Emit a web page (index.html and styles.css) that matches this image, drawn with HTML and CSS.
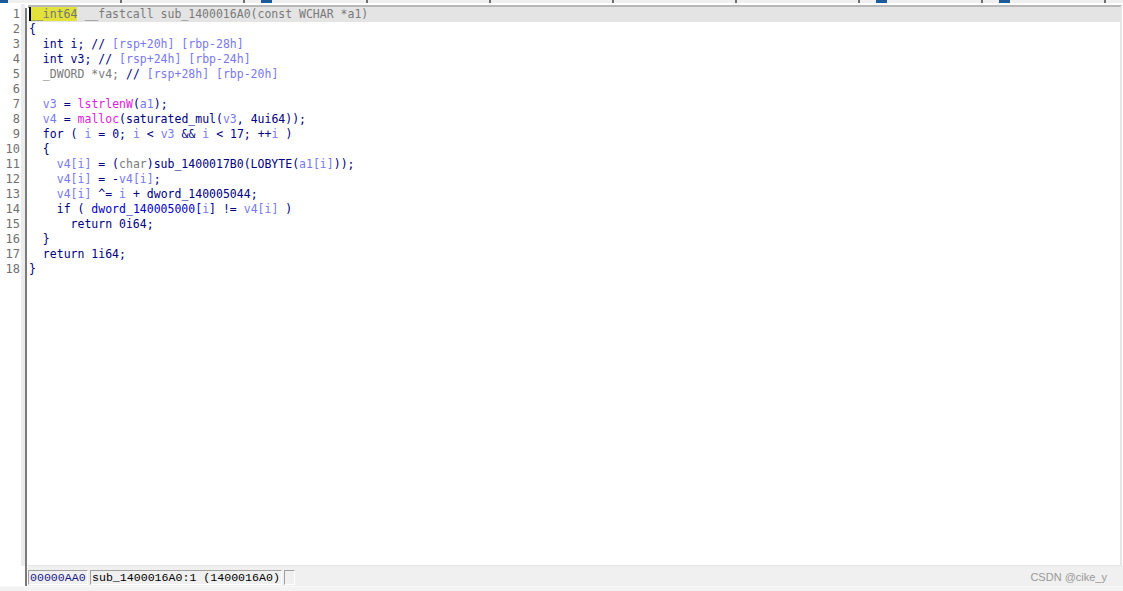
FILE: index.html
```html
<!DOCTYPE html>
<html>
<head>
<meta charset="utf-8">
<link rel="stylesheet" href="styles.css">
</head>
<body>
<div class="tabs">
  <div class="tab"><span class="tmark first"></span></div>
  <div class="tab"></div>
  <div class="tab"><span class="tmark"></span></div>
  <div class="tab"></div>
  <div class="tab"></div>
  <div class="tab"></div>
  <div class="tab"></div>
  <div class="tab"><span class="tmark"></span></div>
  <div class="tab"><span class="tmark"></span></div>
  <div class="tab last"></div>
</div>
<div class="main">
  <div class="gutter">
    <div class="nums">
      <div>1</div><div>2</div><div>3</div><div>4</div><div>5</div><div>6</div>
      <div>7</div><div>8</div><div>9</div><div>10</div><div>11</div><div>12</div>
      <div>13</div><div>14</div><div>15</div><div>16</div><div>17</div><div>18</div>
    </div>
    <div class="gstrip"></div>
    <div class="gline"></div>
  </div>
  <div class="editor">
    <div class="code">
      <div class="ln cur"><span class="cursor"></span><span class="hl">__int64</span><span class="g"> __fastcall sub_1400016A0(const WCHAR *a1)</span></div>
      <div class="ln"><span class="n">{</span></div>
      <div class="ln">  <span class="n">int i; //</span> <span class="l">[rsp+20h] [rbp-28h]</span></div>
      <div class="ln">  <span class="n">int v3; //</span> <span class="l">[rsp+24h] [rbp-24h]</span></div>
      <div class="ln">  <span class="g">_DWORD *v4;</span> <span class="n">//</span> <span class="l">[rsp+28h] [rbp-20h]</span></div>
      <div class="ln"> </div>
      <div class="ln">  <span class="l">v3</span> <span class="n">=</span> <span class="m">lstrlenW</span><span class="n">(</span><span class="l">a1</span><span class="n">);</span></div>
      <div class="ln">  <span class="l">v4</span> <span class="n">=</span> <span class="m">malloc</span><span class="n">(saturated_mul(</span><span class="l">v3</span><span class="n">, 4ui64));</span></div>
      <div class="ln">  <span class="n">for (</span> <span class="l">i</span> <span class="n">= 0;</span> <span class="l">i</span> <span class="n">&lt;</span> <span class="l">v3</span> <span class="n">&amp;&amp;</span> <span class="l">i</span> <span class="n">&lt; 17; ++</span><span class="l">i</span> <span class="n">)</span></div>
      <div class="ln">  <span class="n">{</span></div>
      <div class="ln">    <span class="l">v4[i]</span> <span class="n">= (</span><span class="g">char</span><span class="n">)sub_1400017B0(LOBYTE(</span><span class="l">a1[i]</span><span class="n">));</span></div>
      <div class="ln">    <span class="l">v4[i]</span> <span class="n">= -</span><span class="l">v4[i]</span><span class="n">;</span></div>
      <div class="ln">    <span class="l">v4[i]</span> <span class="n">^=</span> <span class="l">i</span> <span class="n">+ dword_140005044;</span></div>
      <div class="ln">    <span class="n">if (</span> <span class="b">dword_140005000[</span><span class="l">i</span><span class="n">] !=</span> <span class="l">v4[i]</span> <span class="n">)</span></div>
      <div class="ln">      <span class="n">return 0i64;</span></div>
      <div class="ln">  <span class="n">}</span></div>
      <div class="ln">  <span class="n">return 1i64;</span></div>
      <div class="ln"><span class="n">}</span></div>
    </div>
  </div>
</div>
<div class="status">
  <div class="gutter-s"><div class="gline"></div></div>
  <div class="fields">
    <div class="field addr">00000AA0</div>
    <div class="field">sub_1400016A0:1 (1400016A0)</div>
    <div class="field empty"></div>
    <div class="spacer"></div>
    <div class="wm">CSDN @cike_y</div>
  </div>
</div>
<div class="bottom"></div>
</body>
</html>
```
FILE: styles.css
```css
html, body {
  margin: 0;
  padding: 0;
  background: #ffffff;
  width: 1123px;
  height: 591px;
  overflow: hidden;
}
.tabs {
  display: flex;
  height: 3px;
  background: #f0f0f0;
}
.tab {
  width: 121px;
  flex: none;
  border-right: 2px solid #707070;
  position: relative;
}
.tab:first-child { width: 120px; }
.tab.last { width: 4px; border-right: none; flex: 1; }
.tmark {
  position: absolute;
  left: 16px;
  top: 0;
  width: 11px;
  height: 3px;
  background: #1f5a9a;
}
.tmark.first { left: 0; width: 8px; }
.main {
  display: flex;
  height: 563px;
}
.gutter {
  display: flex;
  width: 28px;
  flex: none;
  padding-top: 1px;
}
.nums {
  width: 21px;
  padding-top: 3px;
  font-family: "DejaVu Sans Mono", "Liberation Mono", monospace;
  font-size: 12px;
  line-height: 15px;
  color: #707070;
  text-align: right;
  box-sizing: border-box;
  padding-right: 1px;
}
.gstrip {
  width: 4px;
  background: #ececec;
}
.gline {
  width: 2px;
  background: #7a7a7a;
  margin-top: 4px;
}
.editor {
  flex: 1;
  border-top: 2px solid #b8b8b8;
  box-shadow: inset 0 1px 0 #888;
  margin-top: 2px;
  border-right: 2px solid #e6e6e6;
  border-bottom: 1px solid #e6e6e6;
  margin-right: 1px;
  overflow: hidden;
}
.code {
  font-family: "DejaVu Sans Mono", "Liberation Mono", monospace;
  font-size: 11.5px;
  line-height: 15px;
  color: #000080;
  padding-left: 1px;
}
.ln { height: 15px; white-space: pre; }
.ln.cur { background: #e4e4e4; }
.cursor {
  display: inline-block;
  width: 2px;
  height: 14px;
  vertical-align: -3px;
  background: #000;
  margin-right: -2px;
  position: relative;
  z-index: 1;
}
.hl { background: #e2e23a; color: #757575; }
.g { color: #7a7a7a; }
.n { color: #000080; }
.b { color: #0000c8; }
.l { color: #7878f0; }
.m { color: #e020e0; }
.status {
  display: flex;
  height: 20px;
  background: #f0f0f0;
}
.gutter-s {
  width: 28px;
  flex: none;
  display: flex;
  justify-content: flex-end;
  background: #fff;
}
.gutter-s .gline { margin: 0 1px 0 0; width: 2px; }
.fields {
  flex: 1;
  display: flex;
  align-items: center;
  gap: 2px;
  padding-top: 2px;
}
.field {
  height: 15px;
  box-sizing: border-box;
  border-top: 1px solid #a0a0a0;
  border-left: 1px solid #a0a0a0;
  border-right: 1px solid #ffffff;
  border-bottom: 1px solid #ffffff;
  font-family: "Liberation Mono", monospace;
  font-size: 11.6px;
  line-height: 13px;
  padding: 0 1px;
  color: #000;
  white-space: pre;
}
.field.addr { color: #1a1a8a; width: 60px; }
.field.empty { width: 11px; }
.spacer { flex: 1; }
.wm {
  font-family: "Liberation Sans", Arial, sans-serif;
  font-size: 11px;
  color: #999;
  padding-right: 16px;
}
.bottom {
  height: 5px;
  background: #f3f3f3;
  border-top: 1px solid #fafafa;
}
```
